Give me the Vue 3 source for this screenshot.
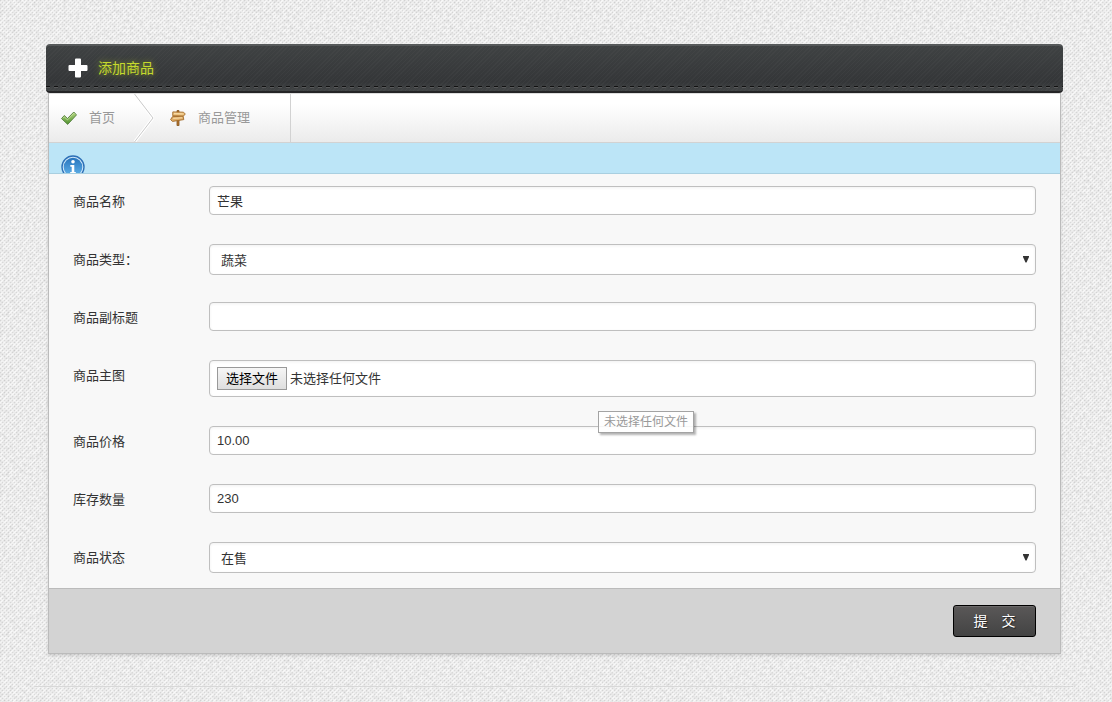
<script setup>
import { reactive, ref } from 'vue'

const form = reactive({
  name: '芒果',
  type: '蔬菜',
  subtitle: '',
  price: '10.00',
  stock: '230',
  status: '在售',
})
const fileInput = ref(null)
const fileName = ref('未选择任何文件')

function onFile(e) {
  fileName.value = e.target.files[0]?.name ?? '未选择任何文件'
}
</script>

<template>
  <main class="page">
    <section class="card">
      <header class="title-bar">
        <svg class="plus" viewBox="0 0 20 20" aria-hidden="true">
          <path d="M8 0.5h4q1 0 1 1V7h5.500q1 0 1 1v4q0 1-1 1H13v5.500q0 1-1 1H8q-1 0-1-1V13H1.500q-1 0-1-1V8q0-1 1-1H7V1.500q0-1 1-1z" fill="#fff" />
        </svg>
        <h1>添加商品</h1>
      </header>

      <div class="body">
        <nav class="crumbs">
          <a class="crumb home" href="#">
            <svg class="icon" viewBox="0 0 16 16" aria-hidden="true">
              <defs>
                <linearGradient id="tick" x1="0" y1="0" x2="0" y2="1">
                  <stop offset="0" stop-color="#b5d77f" />
                  <stop offset="1" stop-color="#4f9130" />
                </linearGradient>
              </defs>
              <path d="M.5 8.600 3.300 5.500l3.200 3L12.800 2l2.700 2.900-8.800 9.500z" fill="url(#tick)" stroke="#55803f" stroke-width=".9" stroke-linejoin="round" />
              <path d="M2 8.300l1.300-1.400 3.200 3L12.800 3.300l1 1" fill="none" stroke="#cbe3a5" stroke-width=".8" />
            </svg>
            <span>首页</span>
          </a>
          <svg class="chevron" viewBox="0 0 20 48" aria-hidden="true">
            <path d="M.5 0 19 24 .5 48" fill="none" stroke="#fff" stroke-width="3" />
            <path d="M.5 0 19 24 .5 48" fill="none" stroke="#c9c9c9" />
          </svg>
          <a class="crumb goods" href="#">
            <svg class="icon" viewBox="0 0 16 16" aria-hidden="true">
              <path d="M7 .6h2v15H7z" fill="#b97832" stroke="#805019" stroke-width=".8" />
              <path d="M2.800 1.900 13.500 2.200l1.800 1.800-2 2.200L2.700 5.700z" fill="#ecc07b" stroke="#a26a28" stroke-width=".9" />
              <path d="M.6 9.600 2.500 6.600l10.600-.4.700 3.400-11.300 1.800z" fill="#dfad68" stroke="#a26a28" stroke-width=".9" />
              <path d="M4 3.600l8.700.3M3.200 8.400l9-.6" stroke="#f9dfad" />
            </svg>
            <span>商品管理</span>
          </a>
        </nav>

        <div class="notice">
          <svg class="info" viewBox="0 0 24 24" aria-hidden="true">
            <defs>
              <linearGradient id="info" x1="0" y1="0" x2="0" y2="1">
                <stop offset="0" stop-color="#2774bd" />
                <stop offset="1" stop-color="#62b3ea" />
              </linearGradient>
            </defs>
            <circle cx="12" cy="12" r="11" fill="#d3eafa" stroke="#2d70b7" stroke-width="1.400" />
            <circle cx="12" cy="12" r="9.300" fill="url(#info)" />
            <circle cx="12" cy="6.800" r="1.800" fill="#fff" />
            <path d="M9.300 10h4v7h1.500v1.600H9.200V17h1.500v-5.300H9.300z" fill="#fff" />
          </svg>
        </div>

        <form @submit.prevent>
          <div class="row">
            <label for="name">商品名称</label>
            <input id="name" v-model="form.name" class="box" type="text" />
          </div>
          <div class="row">
            <label for="type">商品类型：</label>
            <div class="pick">
              <select id="type" v-model="form.type" class="box">
                <option>蔬菜</option>
                <option>水果</option>
              </select>
              <svg class="arrow" viewBox="0 0 6 7" aria-hidden="true"><path d="M0 0h6v1L3.500 6.500h-1L0 1z" fill="#333" /></svg>
            </div>
          </div>
          <div class="row">
            <label for="subtitle">商品副标题</label>
            <input id="subtitle" v-model="form.subtitle" class="box" type="text" />
          </div>
          <div class="row">
            <label for="image">商品主图</label>
            <div class="box file">
              <input id="image" ref="fileInput" class="native-file" type="file" tabindex="-1" @change="onFile" />
              <button class="choose" type="button" @click="fileInput.click()">选择文件</button>
              <span>{{ fileName }}</span>
              <div class="tip" role="tooltip">未选择任何文件</div>
            </div>
          </div>
          <div class="row">
            <label for="price">商品价格</label>
            <input id="price" v-model="form.price" class="box" type="text" />
          </div>
          <div class="row">
            <label for="stock">库存数量</label>
            <input id="stock" v-model="form.stock" class="box" type="text" />
          </div>
          <div class="row">
            <label for="status">商品状态</label>
            <div class="pick">
              <select id="status" v-model="form.status" class="box">
                <option>在售</option>
                <option>下架</option>
              </select>
              <svg class="arrow" viewBox="0 0 6 7" aria-hidden="true"><path d="M0 0h6v1L3.500 6.500h-1L0 1z" fill="#333" /></svg>
            </div>
          </div>
          <div class="actions">
            <button class="submit" type="submit">提　交</button>
          </div>
        </form>
      </div>
    </section>
    <hr class="rule" />
  </main>
</template>

<style>
html {
  min-height: 100%;
  background-color: #f0f0f0;
  background-image:
    url("data:image/svg+xml,%3Csvg xmlns='http://www.w3.org/2000/svg' width='160' height='160'%3E%3Cfilter id='n' x='0' y='0' width='1' height='1'%3E%3CfeTurbulence type='fractalNoise' baseFrequency='.3' numOctaves='2' stitchTiles='stitch'/%3E%3CfeColorMatrix values='0 0 0 0 0 0 0 0 0 0 0 0 0 0 0 .16 0 0 0 -.06'/%3E%3C/filter%3E%3Crect width='160' height='160' filter='url(%23n)'/%3E%3C/svg%3E"),
    url("data:image/svg+xml,%3Csvg xmlns='http://www.w3.org/2000/svg' width='4' height='4' shape-rendering='crispEdges'%3E%3Cpath d='M0 0h1v1H0zM2 2h1v1H2z' fill='%23dbdbdb'/%3E%3Cpath d='M2 0h1v1H2zM0 2h1v1H0zM1 1h1v1H1zM3 3h1v1H3z' fill='%23f9f9f9'/%3E%3C/svg%3E");
}
</style>

<style scoped>
.page {
  padding: 44px 39px 0 35px;
  font-family: "Liberation Sans", "Noto Sans CJK SC", sans-serif;
  font-size: 13px;
  line-height: 20px;
  color: #333;
}
.card { margin: 0 12px 0 13px; }
.title-bar {
  position: relative;
  display: flex;
  align-items: center;
  gap: 10px;
  box-sizing: border-box;
  height: 49px;
  margin: 0 -2px;
  padding: 0 22px 2px;
  border-top: 2px solid #56595a;
  border-bottom: 2px solid #242426;
  border-radius: 4px;
  background:
    repeating-linear-gradient(135deg, rgba(255, 255, 255, .025) 0 1px, transparent 1px 3px),
    linear-gradient(#3f4243, #343638 80%, #414445);
}
.title-bar::before,
.title-bar::after {
  content: "";
  position: absolute;
  right: 0;
  bottom: 4px;
  left: 0;
  height: 1px;
  background: repeating-linear-gradient(90deg, #111 0 4px, transparent 4px 8px);
}
.title-bar::after {
  bottom: 3px;
  background: repeating-linear-gradient(90deg, #58595a 0 4px, transparent 4px 8px);
}
.plus { width: 20px; height: 20px; }
h1 {
  margin: 0;
  font-size: 14px;
  font-weight: 400;
  line-height: 20px;
  color: #c5d92d;
  text-shadow: 0 0 6px rgba(190, 220, 30, .6);
}
.body {
  border: 1px solid #bbb;
  border-top: 0;
  background: #f8f8f8;
  box-shadow: 0 2px 3px rgba(0, 0, 0, .12);
}
.crumbs {
  display: flex;
  height: 48px;
  border-top: 1px solid #ddd;
  border-bottom: 1px solid #d2d2d2;
  background: linear-gradient(#fff 20%, #ebebeb);
}
.crumb {
  display: flex;
  align-items: center;
  gap: 12px;
  color: #999;
  text-decoration: none;
}
.home { padding: 0 19px 0 12px; }
.goods { padding: 0 40px 0 16px; border-right: 1px solid #d2d2d2; }
.icon { width: 16px; height: 16px; }
.chevron { width: 20px; height: 48px; }
.notice {
  height: 30px;
  overflow: hidden;
  border-bottom: 1px solid #a9cfe0;
  background: #bce5f7;
}
.info { display: block; width: 24px; height: 24px; margin: 12px 12px 0; }
.row {
  display: grid;
  grid-template-columns: 136px 1fr;
  align-items: start;
  box-sizing: border-box;
  min-height: 58px;
  padding: 12px 24px 0;
}
.row:has(.file) { padding-bottom: 17px; }
.row > label { padding-top: 6px; }
.box {
  box-sizing: border-box;
  width: 100%;
  height: 29px;
  margin: 0;
  padding: 0 7px;
  border: 1px solid #bfbfbf;
  border-radius: 4px;
  background: #fff;
  box-shadow: inset 0 1px 3px rgba(0, 0, 0, .06);
  font: inherit;
  color: #333;
}
.pick { position: relative; }
select.box {
  display: block;
  height: 31px;
  padding: 2px 11px 0;
  appearance: none;
}
.arrow {
  position: absolute;
  top: 12px;
  right: 7px;
  width: 6px;
  height: 7px;
  pointer-events: none;
}
.file {
  position: relative;
  display: flex;
  align-items: center;
  gap: 3px;
  height: 37px;
}
.native-file {
  position: absolute;
  width: 1px;
  height: 1px;
  opacity: 0;
}
.choose {
  width: 70px;
  height: 23px;
  padding: 0;
  border: 1px solid #999;
  background: linear-gradient(#f6f6f6, #dedede);
  font: inherit;
  color: #000;
}
.tip {
  position: absolute;
  top: 50px;
  left: 388px;
  padding: 0 5px;
  border: 1px solid #a3a3a3;
  background: rgba(255, 255, 255, .85);
  box-shadow: 2px 2px 2px rgba(0, 0, 0, .3);
  font-size: 12px;
  line-height: 20px;
  white-space: nowrap;
  color: #999;
}
.actions {
  display: flex;
  justify-content: flex-end;
  padding: 16px 24px;
  border-top: 1px solid #bbb;
  background: #d3d3d3;
}
.submit {
  width: 83px;
  height: 32px;
  padding: 0;
  border: 1px solid #000;
  border-radius: 3px;
  background: linear-gradient(#5a5858, #434343);
  box-shadow: inset 0 1px 0 #6d6b6b;
  font: inherit;
  font-size: 14px;
  color: #fff;
  text-shadow: 1px 1px 1px #222;
}
.rule {
  height: 1px;
  margin: 32px 0 0;
  border: 0;
  background: #d8d8d8;
}
</style>
